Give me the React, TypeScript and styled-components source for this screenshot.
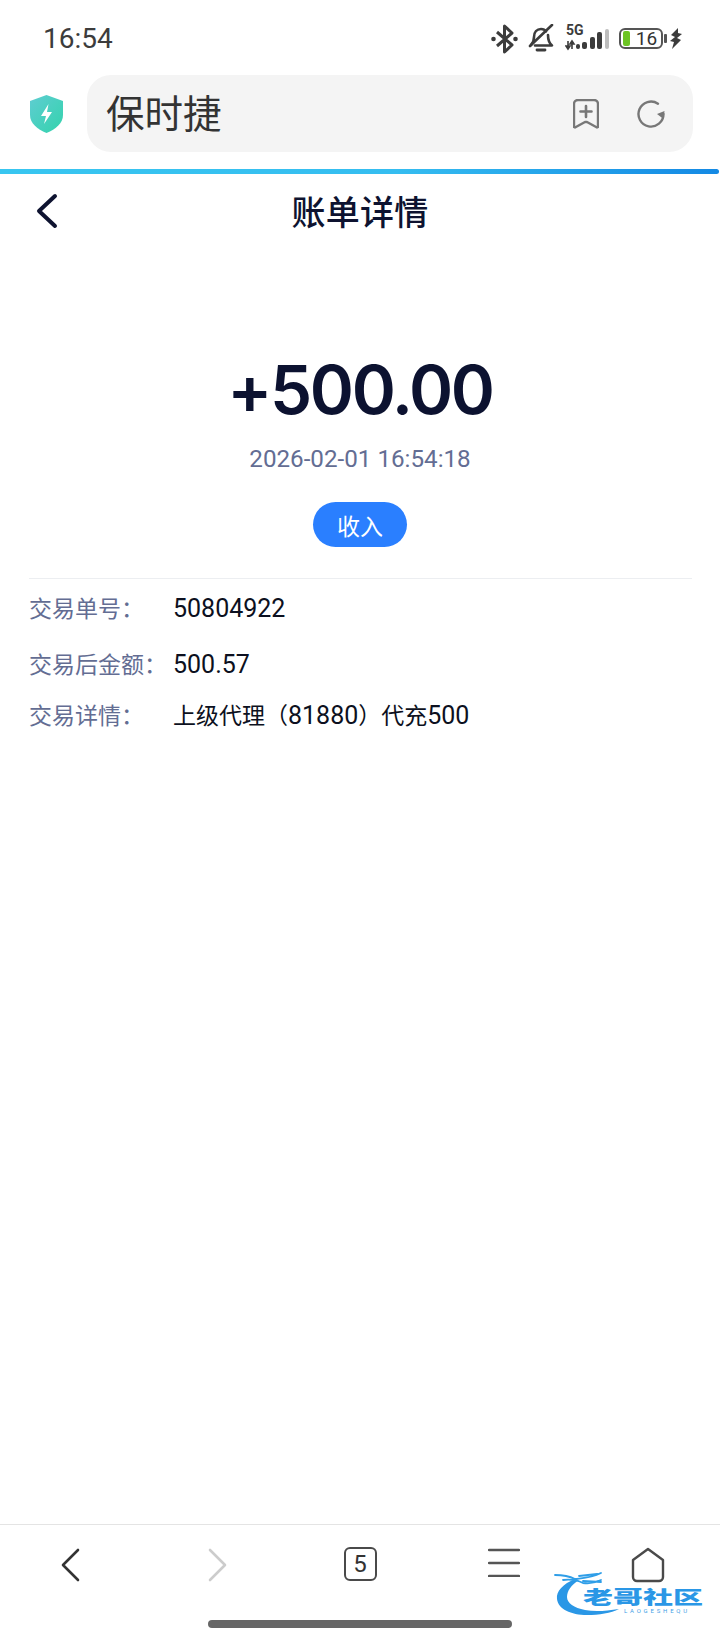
import React from 'react';
import styled, {createGlobalStyle} from 'styled-components';

const cjk = '"Noto Sans CJK SC", sans-serif';
const latin = 'Inter, "Noto Sans CJK SC", sans-serif';

const GlobalStyle = createGlobalStyle`
  html, body {
    margin: 0;
    padding: 0;
    background: #fff;
  }
  * {
    box-sizing: border-box;
  }
`;

const Page = styled.div`
  position: relative;
  width: 720px;
  height: 1640px;
  display: flex;
  flex-direction: column;
  overflow: hidden;
  background: #fff;
  font-family: ${cjk};
`;

const StatusBar = styled.div`
  height: 75px;
  flex: none;
  padding: 2px 38px 0 43px;
  display: flex;
  align-items: center;
  justify-content: space-between;
`;

const Clock = styled.span`
  font-family: Roboto, sans-serif;
  font-size: 28px;
  color: #3c3c3c;
`;

const StatusIcons = styled.div`
  display: flex;
  align-items: center;
`;

const Svg = styled.svg<{$gap?: number}>`
  display: block;
  flex: none;
  margin-left: ${props => props.$gap || 0}px;
`;

const Signal = styled.div`
  position: relative;
  width: 45px;
  height: 26px;
  margin-left: 11px;
`;

const FiveG = styled.span`
  position: absolute;
  left: 1px;
  top: -3px;
  font-family: Roboto, sans-serif;
  font-size: 14px;
  font-weight: 700;
  line-height: 15px;
  color: #3c3c3c;
`;

const Battery = styled.div`
  position: relative;
  width: 44px;
  height: 21px;
  margin-left: 9px;
  padding-left: 11px;
  border: 2px solid #555;
  border-radius: 6px;
  display: flex;
  align-items: center;
  justify-content: center;
  font-family: Roboto, sans-serif;
  font-size: 19px;
  color: #333;
  &::before {
    content: '';
    position: absolute;
    left: 2px;
    top: 1px;
    bottom: 1px;
    width: 7px;
    border-radius: 2px;
    background: #6cc423;
  }
  &::after {
    content: '';
    position: absolute;
    right: -6px;
    top: 4px;
    width: 3px;
    height: 9px;
    border-radius: 1px;
    background: #555;
  }
`;

const Toolbar = styled.div`
  height: 94px;
  flex: none;
  padding: 0 27px 17px 30px;
  display: flex;
  align-items: center;
  gap: 24px;
`;

const AddressBar = styled.div`
  flex: 1;
  height: 77px;
  padding: 0 28px 0 19px;
  border-radius: 24px;
  background: #f4f4f4;
  display: flex;
  align-items: center;
`;

const AddressText = styled.span`
  flex: 1;
  margin-top: -4px;
  font-size: 38.500px;
  line-height: 1;
  color: #333;
`;

const AddressActions = styled.div`
  display: flex;
  align-items: center;
  gap: 38px;
`;

const Progress = styled.div`
  height: 5px;
  flex: none;
  border-radius: 0 3px 3px 0;
  margin-right: 1px;
  background: linear-gradient(90deg, #38c6f0 0%, #35bdf0 55%, #1489e4 100%);
`;

const Content = styled.main`
  flex: 1;
  display: flex;
  flex-direction: column;
  min-height: 0;
`;

const Header = styled.header`
  position: relative;
  height: 72px;
  flex: none;
  display: flex;
  align-items: center;
  justify-content: center;
`;

const BackButton = styled.div`
  position: absolute;
  left: 35px;
  top: 19px;
`;

const Title = styled.h1`
  margin: 0;
  font-size: 34px;
  font-weight: 500;
  letter-spacing: 0.3px;
  color: #0e1330;
`;

const Summary = styled.section`
  padding-top: 102px;
  display: flex;
  flex-direction: column;
  align-items: center;
`;

const Amount = styled.div`
  font-family: ${latin};
  font-size: 67px;
  font-weight: 600;
  line-height: 84px;
  letter-spacing: -2.300px;
  color: #0c1230;
`;

const DateText = styled.div`
  margin-top: 12px;
  font-family: Roboto, sans-serif;
  font-size: 24.200px;
  line-height: 30px;
  color: #636d93;
`;

const Pill = styled.div`
  margin-top: 28px;
  width: 94px;
  height: 45px;
  border-radius: 23px;
  background: #2a7fff;
  display: flex;
  align-items: center;
  justify-content: center;
  font-size: 23px;
  color: #fff;
`;

const Details = styled.section`
  margin: 31px 28px 0 29px;
  padding-top: 10px;
  border-top: 1px solid #eceef1;
`;

const Row = styled.div<{$height: number}>`
  height: ${props => props.$height}px;
  display: flex;
  align-items: center;
`;

const Label = styled.span`
  width: 144px;
  flex: none;
  font-size: 23px;
  color: #636d93;
`;

const Value = styled.span`
  font-family: ${cjk};
  font-size: 23px;
  color: #0c1020;
`;

const Digits = styled.span`
  font-family: Roboto, sans-serif;
  font-size: 25px;
`;

const BottomNav = styled.nav`
  height: 116px;
  flex: none;
  padding-top: 22px;
  border-top: 1px solid #e4e4e4;
  display: grid;
  grid-template-columns: repeat(5, 1fr);
  justify-items: center;
  align-items: start;
`;

const TabCount = styled.div`
  width: 33px;
  height: 34px;
  border: 2px solid #4a4a4a;
  border-radius: 6px;
  display: flex;
  align-items: center;
  justify-content: center;
  font-family: Roboto, sans-serif;
  font-size: 24px;
  color: #333;
`;

const HomeIndicator = styled.div`
  position: absolute;
  left: 208px;
  bottom: 12px;
  width: 304px;
  height: 8px;
  border-radius: 4px;
  background: #666;
`;

const Watermark = styled.div`
  position: absolute;
  right: 17px;
  bottom: 22px;
  width: 150px;
  height: 47px;
`;

const WatermarkName = styled.span`
  position: absolute;
  right: 0;
  top: 14px;
  font-size: 30px;
  font-weight: 900;
  line-height: 22px;
  white-space: nowrap;
  color: #2a97e6;
  transform: scaleY(0.62);
`;

const WatermarkSub = styled.span`
  position: absolute;
  right: 13px;
  top: 36px;
  font-family: Roboto, sans-serif;
  font-size: 6px;
  line-height: 7px;
  letter-spacing: 2.800px;
  color: #3f9fe6;
`;

const Chevron = ({d, color, width}: {d: string; color: string; width: number}) => (
  <Svg width="24" height="36" viewBox="0 0 24 36" fill="none">
    <path d={d} stroke={color} strokeWidth={width} strokeLinecap="round" strokeLinejoin="round" />
  </Svg>
);

const StatusGlyphs = () => (
  <StatusIcons>
    <Svg width="27" height="30" viewBox="0 0 27 30" fill="none">
      <path d="M6 8l15 13-7.500 7V2L21 9 6 22" stroke="#3c3c3c" strokeWidth="3" strokeLinejoin="round" />
      <circle cx="2.500" cy="15" r="2.300" fill="#3c3c3c" />
      <circle cx="24.500" cy="15" r="2.300" fill="#3c3c3c" />
    </Svg>
    <Svg $gap={10} width="26" height="29" viewBox="0 0 26 29" fill="none">
      <path d="M3 21c2-2 3-4 3-8 0-5 3-8 7-8 2 0 4 .8 5 2.500M20 11c0 5 1 8 4 10.500H7" stroke="#3c3c3c" strokeWidth="2.600" strokeLinecap="round" strokeLinejoin="round" />
      <path d="M2 22L24 1" stroke="#3c3c3c" strokeWidth="2.600" strokeLinecap="round" />
      <path d="M9 26h8" stroke="#3c3c3c" strokeWidth="2.800" strokeLinecap="round" />
    </Svg>
    <Signal>
      <FiveG>5G</FiveG>
      <Svg width="45" height="26" viewBox="0 0 45 26">
        <path d="M3 15v8M1 20l2 3 2-3zM7 23v-8M5 18l2-3 2 3z" stroke="#3c3c3c" strokeWidth="1.600" fill="#3c3c3c" />
        <rect x="11" y="18" width="4" height="5" rx="2" fill="#3c3c3c" />
        <rect x="17" y="16" width="5" height="7" rx="2" fill="#3c3c3c" />
        <rect x="25" y="11" width="5" height="12" rx="2" fill="#3c3c3c" />
        <rect x="32" y="6" width="5" height="17" rx="2" fill="#3c3c3c" />
        <rect x="40" y="3" width="4" height="20" rx="2" fill="#bdbdbd" />
      </Svg>
    </Signal>
    <Battery>16</Battery>
    <Svg $gap={7} width="12" height="21" viewBox="0 0 12 21">
      <path d="M8 0L1 7l4 2-5 4 4 1-2 7 9-9-4-2 5-4-4-1z" fill="#3c3c3c" />
    </Svg>
  </StatusIcons>
);

const Shield = () => (
  <Svg width="33" height="38" viewBox="0 0 33 38">
    <defs>
      <linearGradient id="shield" x1="0" y1="0" x2="1" y2="1">
        <stop offset="0" stopColor="#5fcdd2" />
        <stop offset="1" stopColor="#33d3ac" />
      </linearGradient>
    </defs>
    <path d="M16.500 0L33 6v14c0 8-7 14-16.500 18C7 34 0 28 0 20V6z" fill="url(#shield)" />
    <path d="M18.500 9l-7.500 12h5l-2 8 8-12h-5z" fill="#fff" />
  </Svg>
);

const BookmarkAdd = () => (
  <Svg width="26" height="30" viewBox="0 0 26 30" fill="none">
    <path d="M5 1h16a4 4 0 0 1 4 4v23l-1 .5-10-5.500h-2L2 28.500 1 28V5a4 4 0 0 1 4-4z" stroke="#777" strokeWidth="2.400" strokeLinejoin="round" />
    <path d="M13 7v11M7.500 12.500h11" stroke="#777" strokeWidth="2.600" strokeLinecap="round" />
  </Svg>
);

const Reload = () => (
  <Svg width="28" height="28" viewBox="0 0 28 28" fill="none">
    <path d="M26.500 14A12.500 12.500 0 1 1 21 3.700" stroke="#777" strokeWidth="2.400" strokeLinecap="round" />
    <path d="M27.500 11l-1 8-6.500-5z" fill="#777" />
  </Svg>
);

const LogoDragon = () => (
  <Svg width="150" height="47" viewBox="0 0 150 47" fill="none">
    <path d="M22 8C10 13 3 20 4 28c1 10 14 16 30 16 12 0 24-2 32-6-13 2-24 3-34 1-11-2-18-7-18-13 0-6 4-12 12-17z" fill="#2a97e6" />
    <path d="M2 4c8 0 14 1 20 4 8-1 16-1 26-6M10 9c8-1 14 0 20 3 6 1 12 0 18-3M26 5l18-2M30 10l18 1" stroke="#2f9ee8" strokeWidth="1.800" strokeLinecap="round" />
  </Svg>
);

const App = () => (
  <Page>
    <GlobalStyle />
    <StatusBar>
      <Clock>16:54</Clock>
      <StatusGlyphs />
    </StatusBar>
    <Toolbar>
      <Shield />
      <AddressBar>
        <AddressText>保时捷</AddressText>
        <AddressActions>
          <BookmarkAdd />
          <Reload />
        </AddressActions>
      </AddressBar>
    </Toolbar>
    <Progress />
    <Content>
      <Header>
        <BackButton>
          <Chevron d="M20 3L4 18l16 15" color="#0e1330" width={4} />
        </BackButton>
        <Title>账单详情</Title>
      </Header>
      <Summary>
        <Amount>+500.00</Amount>
        <DateText>2026-02-01 16:54:18</DateText>
        <Pill>收入</Pill>
      </Summary>
      <Details>
        <Row $height={35}>
          <Label>交易单号：</Label>
          <Value><Digits>50804922</Digits></Value>
        </Row>
        <Row $height={78}>
          <Label>交易后金额：</Label>
          <Value><Digits>500.57</Digits></Value>
        </Row>
        <Row $height={24}>
          <Label>交易详情：</Label>
          <Value>上级代理（<Digits>81880</Digits>）代充<Digits>500</Digits></Value>
        </Row>
      </Details>
    </Content>
    <BottomNav>
      <Chevron d="M18 3L3 18l15 15" color="#333" width={2.600} />
      <Chevron d="M6 3l15 15L6 33" color="#ccc" width={2.600} />
      <TabCount>5</TabCount>
      <Svg width="32" height="30" viewBox="0 0 32 30" fill="none">
        <path d="M1 3h30M1 16h30M1 29h30" stroke="#555" strokeWidth="2.400" strokeLinecap="round" />
      </Svg>
      <Svg width="34" height="36" viewBox="0 0 34 36" fill="none">
        <path d="M17 2l15 11v17a4 4 0 0 1-4 4H6a4 4 0 0 1-4-4V13z" stroke="#4a4a4a" strokeWidth="2.400" strokeLinejoin="round" />
      </Svg>
    </BottomNav>
    <HomeIndicator />
    <Watermark>
      <LogoDragon />
      <WatermarkName>老哥社区</WatermarkName>
      <WatermarkSub>LAOGESHEQU</WatermarkSub>
    </Watermark>
  </Page>
);

export default App;
